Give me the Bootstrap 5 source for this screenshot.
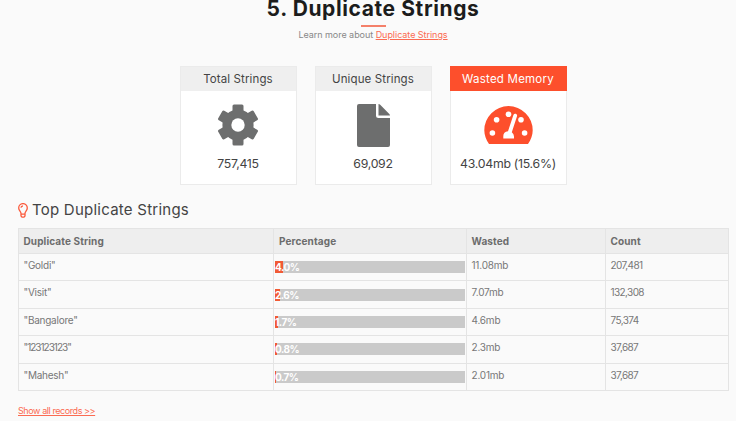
<!DOCTYPE html>
<html lang="en">
<head>
<meta charset="utf-8">
<meta name="viewport" content="width=device-width, initial-scale=1">
<title>Duplicate Strings</title>
<link href="https://cdn.jsdelivr.net/npm/bootstrap@5.3.0/dist/css/bootstrap.min.css" rel="stylesheet">
<style>
body{background:#fafafa;font-family:"Inter","Liberation Sans",sans-serif;color:#777;font-size:9.5px;overflow:hidden}
header,.stats{padding-left:10px}
.page-title{font-size:21px;line-height:26px;font-weight:700;color:#1c1c1c;letter-spacing:.6px;margin-top:-4px}
.title-rule{width:25px;height:2px;background:#f4806a;margin-top:3px}
.learn{font-size:9px;line-height:14px;margin-top:1px;letter-spacing:-.04px;color:#888}
.accent-link{color:#fb6b52;text-decoration:underline}
.stats{gap:18px;margin-top:24px}
.stat{width:117px;height:119px;border:1px solid #ebebeb;background:#fff;color:#444}
.stat-head{height:25px;line-height:25px;font-size:11.5px;letter-spacing:.12px;background:#efefef;margin:-1px -1px 0;border:1px solid #ebebeb;border-bottom:0}
.stat-hot .stat-head{background:#fd4f2c;border-color:#fd4f2c;color:#fff;letter-spacing:.22px}
.stat-icon{height:68px}
.stat-value{font-size:12.3px;line-height:16px;letter-spacing:-.28px;margin-top:-3px}
.section-title{font-size:15px;line-height:20px;letter-spacing:.24px;color:#444;margin:15px 0 8px 18px}
.strings{width:711px;margin:0 0 0 18px;table-layout:fixed;color:#777;line-height:13px;--bs-table-bg:transparent;--bs-table-color:#777;border-color:#e4e4e4}
.strings th{background:#eee;height:25px;padding:6px 4.500px 5px;font-size:10px;letter-spacing:.12px;font-weight:700;color:#6c6c6c}
.strings td{height:27.4px;padding:5px 4.500px 8px;font-size:10px;letter-spacing:-.2px}
.strings td:nth-child(1){letter-spacing:-.25px}
.strings td:nth-child(4){letter-spacing:-.6px}
.strings td.digits{letter-spacing:-1px}
.strings td.meter{padding:0 1px}
.strings th:nth-child(2){padding-left:5px}
.track{height:12px;background:#cacaca;border-radius:0;overflow:visible;font-size:10px}
.fill{background:#f15a35;color:#fff;font-weight:700;overflow:visible;text-align:left;line-height:12px;letter-spacing:-.5px}
.more{font-size:9px;line-height:14px;letter-spacing:-.42px;margin:13px 0 0 18px}
</style>
</head>
<body>
<main>
<header class="d-flex flex-column align-items-center text-center">
<h1 class="page-title mb-0">5. Duplicate Strings</h1>
<div class="title-rule"></div>
<p class="learn mb-0">Learn more about <a class="accent-link" href="#">Duplicate Strings</a></p>
</header>
<section class="stats d-flex justify-content-center text-center">
<article class="stat">
<div class="stat-head">Total Strings</div>
<div class="stat-icon d-flex align-items-center justify-content-center">
<svg width="40" height="42" viewBox="-20 -21 40 42" fill="#6d6e6e"><defs><rect id="tooth" x="-5.500" y="-20.500" width="11" height="13" rx="1.500"/></defs><mask id="hub"><rect x="-21" y="-21" width="42" height="42" fill="#fff"/><circle r="6.700" fill="#000"/></mask><g mask="url(#hub)"><circle r="15.600"/><use href="#tooth"/><use href="#tooth" transform="rotate(60)"/><use href="#tooth" transform="rotate(120)"/><use href="#tooth" transform="rotate(180)"/><use href="#tooth" transform="rotate(240)"/><use href="#tooth" transform="rotate(300)"/></g></svg>
</div>
<div class="stat-value">757,415</div>
</article>
<article class="stat">
<div class="stat-head">Unique Strings</div>
<div class="stat-icon d-flex align-items-center justify-content-center">
<svg width="33" height="43" viewBox="0 0 33 43" fill="#6d6e6e"><path d="M2 0H19V11.500Q19 14 21.500 14H33V41Q33 43 31 43H2Q0 43 0 41V2Q0 0 2 0Z"/><path d="M21.500 0Q22.500 0 23.200 .7L32.300 10Q33 10.700 33 11.500H21.500Z"/></svg>
</div>
<div class="stat-value">69,092</div>
</article>
<article class="stat stat-hot">
<div class="stat-head">Wasted Memory</div>
<div class="stat-icon d-flex align-items-center justify-content-center">
<svg width="49" height="38" viewBox="0 0 49 38"><path fill="#fd4f2c" d="M5 38C2 34 .3 29 .3 24.300A24.200 24.200 0 0 1 48.700 24.300C48.700 29 47 34 44 38Z"/><g fill="#fff"><circle cx="8.400" cy="27" r="2.800"/><circle cx="12.600" cy="13.700" r="2.800"/><circle cx="24.500" cy="8.200" r="2.800"/><circle cx="37" cy="13.700" r="2.800"/><circle cx="40.600" cy="27" r="2.800"/><path d="M19.300 32.500V30Q19.300 25.800 24 25.200L29.400 9Q30.200 7.200 31.800 7.800Q33.500 8.400 33 10.200L27.800 26.300Q30 28 30 30.500V32.500Z"/></g></svg>
</div>
<div class="stat-value">43.04mb (15.6%)</div>
</article>
</section>
<h2 class="section-title d-flex align-items-center fw-normal">
<svg width="10" height="15" viewBox="0 0 10 15" fill="none" stroke="#fb5a3c" stroke-width="1.300"><path d="M3 10.400C3 8.300 .7 7.600 .7 4.900A4.300 4.300 0 0 1 9.300 4.900C9.300 7.600 7 8.300 7 10.400V13L6 14.200H4L3 13ZM3 11.200H7M5 2.800Q3.200 2.900 2.900 4.700"/></svg>
<span class="ms-1">Top Duplicate Strings</span>
</h2>
<table class="table table-bordered strings">
<colgroup><col style="width:255px"><col style="width:193px"><col style="width:139px"><col></colgroup>
<thead><tr><th>Duplicate String</th><th>Percentage</th><th>Wasted</th><th>Count</th></tr></thead>
<tbody>
<tr><td>"Goldi"</td><td class="meter align-middle"><div class="progress track"><div class="progress-bar fill" style="width:4%">4.0%</div></div></td><td>11.08mb</td><td>207,481</td></tr>
<tr><td>"Visit"</td><td class="meter align-middle"><div class="progress track"><div class="progress-bar fill" style="width:2.6%">2.6%</div></div></td><td>7.07mb</td><td>132,308</td></tr>
<tr><td>"Bangalore"</td><td class="meter align-middle"><div class="progress track"><div class="progress-bar fill" style="width:1.7%">1.7%</div></div></td><td>4.6mb</td><td>75,374</td></tr>
<tr><td class="digits">"123123123"</td><td class="meter align-middle"><div class="progress track"><div class="progress-bar fill" style="width:.8%">0.8%</div></div></td><td>2.3mb</td><td>37,687</td></tr>
<tr><td>"Mahesh"</td><td class="meter align-middle"><div class="progress track"><div class="progress-bar fill" style="width:.7%">0.7%</div></div></td><td>2.01mb</td><td>37,687</td></tr>
</tbody>
</table>
<p class="more"><a class="accent-link" href="#">Show all records &gt;&gt;</a></p>
</main>
<script src="https://cdn.jsdelivr.net/npm/bootstrap@5.3.0/dist/js/bootstrap.bundle.min.js"></script>
</body>
</html>
